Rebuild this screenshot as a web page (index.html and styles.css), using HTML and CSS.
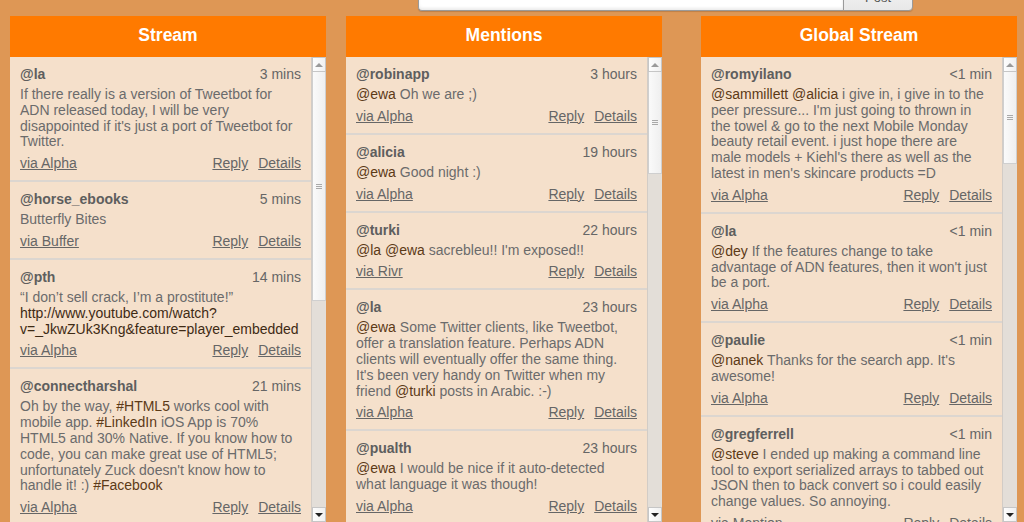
FILE: index.html
```html
<!DOCTYPE html>
<html lang="en">
<head>
    <meta charset="UTF-8" />
    <title>Alpha - Streams</title>
    <link rel="stylesheet" href="styles.css">
</head>
<body>

<div class="composer">
    <div class="composer-box"><span class="char-count">256</span></div>
    <button class="post-btn">Post</button>
</div>

<div class="columns">

    <section class="column">
        <h2 class="column-title">Stream</h2>
        <div class="column-body">
            <ul class="posts">
                <li class="post">
                    <div class="post-head"><span class="user">@la</span><span class="time">3 mins</span></div>
                    <p class="post-text">If there really is a version of Tweetbot for ADN released today, I will be very disappointed if it's just a port of Tweetbot for Twitter.</p>
                    <div class="post-foot"><a href="#">via Alpha</a><span class="actions"><a href="#">Reply</a><a href="#">Details</a></span></div>
                </li>
                <li class="post">
                    <div class="post-head"><span class="user">@horse_ebooks</span><span class="time">5 mins</span></div>
                    <p class="post-text">Butterfly Bites</p>
                    <div class="post-foot"><a href="#">via Buffer</a><span class="actions"><a href="#">Reply</a><a href="#">Details</a></span></div>
                </li>
                <li class="post">
                    <div class="post-head"><span class="user">@pth</span><span class="time">14 mins</span></div>
                    <p class="post-text">“I don’t sell crack, I’m a prostitute!” <a class="link" href="#">http://www.youtube.com/watch?<wbr>v=_JkwZUk3Kng&amp;feature=player_embedded</a></p>
                    <div class="post-foot"><a href="#">via Alpha</a><span class="actions"><a href="#">Reply</a><a href="#">Details</a></span></div>
                </li>
                <li class="post">
                    <div class="post-head"><span class="user">@connectharshal</span><span class="time">21 mins</span></div>
                    <p class="post-text">Oh by the way, <a class="tag" href="#">#HTML5</a> works cool with mobile app. <a class="tag" href="#">#LinkedIn</a> iOS App is 70% HTML5 and 30% Native. If you know how to code, you can make great use of HTML5; unfortunately Zuck doesn't know how to handle it! :) <a class="tag" href="#">#Facebook</a></p>
                    <div class="post-foot"><a href="#">via Alpha</a><span class="actions"><a href="#">Reply</a><a href="#">Details</a></span></div>
                </li>
            </ul>
            <div class="scrollbar">
                <div class="sb-btn sb-up"></div>
                <div class="sb-thumb" style="height: 229px;"></div>
                <div class="sb-track"></div>
                <div class="sb-btn sb-down"></div>
            </div>
        </div>
    </section>

    <section class="column">
        <h2 class="column-title">Mentions</h2>
        <div class="column-body">
            <ul class="posts">
                <li class="post">
                    <div class="post-head"><span class="user">@robinapp</span><span class="time">3 hours</span></div>
                    <p class="post-text"><a class="tag" href="#">@ewa</a> Oh we are ;)</p>
                    <div class="post-foot"><a href="#">via Alpha</a><span class="actions"><a href="#">Reply</a><a href="#">Details</a></span></div>
                </li>
                <li class="post">
                    <div class="post-head"><span class="user">@alicia</span><span class="time">19 hours</span></div>
                    <p class="post-text"><a class="tag" href="#">@ewa</a> Good night :)</p>
                    <div class="post-foot"><a href="#">via Alpha</a><span class="actions"><a href="#">Reply</a><a href="#">Details</a></span></div>
                </li>
                <li class="post">
                    <div class="post-head"><span class="user">@turki</span><span class="time">22 hours</span></div>
                    <p class="post-text"><a class="tag" href="#">@la</a> <a class="tag" href="#">@ewa</a> sacrebleu!! I'm exposed!!</p>
                    <div class="post-foot"><a href="#">via Rivr</a><span class="actions"><a href="#">Reply</a><a href="#">Details</a></span></div>
                </li>
                <li class="post">
                    <div class="post-head"><span class="user">@la</span><span class="time">23 hours</span></div>
                    <p class="post-text"><a class="tag" href="#">@ewa</a> Some Twitter clients, like Tweetbot, offer a translation feature. Perhaps ADN clients will eventually offer the same thing. It's been very handy on Twitter when my friend <a class="tag" href="#">@turki</a> posts in Arabic. :-)</p>
                    <div class="post-foot"><a href="#">via Alpha</a><span class="actions"><a href="#">Reply</a><a href="#">Details</a></span></div>
                </li>
                <li class="post">
                    <div class="post-head"><span class="user">@pualth</span><span class="time">23 hours</span></div>
                    <p class="post-text"><a class="tag" href="#">@ewa</a> I would be nice if it auto-detected what language it was though!</p>
                    <div class="post-foot"><a href="#">via Alpha</a><span class="actions"><a href="#">Reply</a><a href="#">Details</a></span></div>
                </li>
            </ul>
            <div class="scrollbar">
                <div class="sb-btn sb-up"></div>
                <div class="sb-thumb" style="height: 102px;"></div>
                <div class="sb-track"></div>
                <div class="sb-btn sb-down"></div>
            </div>
        </div>
    </section>

    <section class="column column-global">
        <h2 class="column-title">Global Stream</h2>
        <div class="column-body">
            <ul class="posts">
                <li class="post">
                    <div class="post-head"><span class="user">@romyilano</span><span class="time">&lt;1 min</span></div>
                    <p class="post-text"><a class="tag" href="#">@sammillett</a> <a class="tag" href="#">@alicia</a> i give in, i give in to the peer pressure... I'm just going to thrown in the towel &amp; go to the next Mobile Monday beauty retail event. i just hope there are male models + Kiehl's there as well as the latest in men's skincare products =D</p>
                    <div class="post-foot"><a href="#">via Alpha</a><span class="actions"><a href="#">Reply</a><a href="#">Details</a></span></div>
                </li>
                <li class="post">
                    <div class="post-head"><span class="user">@la</span><span class="time">&lt;1 min</span></div>
                    <p class="post-text"><a class="tag" href="#">@dey</a> If the features change to take advantage of ADN features, then it won't just be a port.</p>
                    <div class="post-foot"><a href="#">via Alpha</a><span class="actions"><a href="#">Reply</a><a href="#">Details</a></span></div>
                </li>
                <li class="post">
                    <div class="post-head"><span class="user">@paulie</span><span class="time">&lt;1 min</span></div>
                    <p class="post-text"><a class="tag" href="#">@nanek</a> Thanks for the search app. It's awesome!</p>
                    <div class="post-foot"><a href="#">via Alpha</a><span class="actions"><a href="#">Reply</a><a href="#">Details</a></span></div>
                </li>
                <li class="post">
                    <div class="post-head"><span class="user">@gregferrell</span><span class="time">&lt;1 min</span></div>
                    <p class="post-text"><a class="tag" href="#">@steve</a> I ended up making a command line tool to export serialized arrays to tabbed out JSON then to back convert so i could easily change values. So annoying.</p>
                    <div class="post-foot"><a href="#">via Mention</a><span class="actions"><a href="#">Reply</a><a href="#">Details</a></span></div>
                </li>
            </ul>
            <div class="scrollbar">
                <div class="sb-btn sb-up"></div>
                <div class="sb-thumb" style="height: 92px;"></div>
                <div class="sb-track"></div>
                <div class="sb-btn sb-down"></div>
            </div>
        </div>
    </section>

</div>

</body>
</html>
```

FILE: styles.css
```css
body {
  margin: 0;
  height: 522px;
  overflow: hidden;
  background-color: #de9755;
  font-family: "Liberation Sans", Arial, sans-serif;
  font-size: 14px;
  color: #6b6b6b;
}

/* composer, mostly scrolled out of view */
.composer {
  display: flex;
  height: 41px;
  margin: -30px 0 0 418px;
  width: 495px;
}

.composer-box {
  flex: 1;
  display: flex;
  align-items: flex-end;
  padding: 0 0 8px 5px;
  background-color: #fff;
  border: 1px solid #9a9a9a;
  border-right: none;
  border-radius: 0 0 0 4px;
  box-shadow: inset 0 -2px 3px rgba(0,0,0,0.08), 0 1px 1px rgba(0,0,0,0.15);
}

.char-count {
  color: #c4c4c4;
  font-size: 13px;
  line-height: 14px;
}

.post-btn {
  width: 70px;
  display: flex;
  align-items: flex-end;
  justify-content: center;
  padding: 0 0 5px;
  font-family: "Liberation Sans", Arial, sans-serif;
  font-size: 13px;
  line-height: 14px;
  color: #555;
  background: linear-gradient(#fafafa, #e8e8e8);
  border: 1px solid #9a9a9a;
  border-radius: 0 0 4px 0;
  box-shadow: 0 1px 1px rgba(0,0,0,0.15);
}

/* columns */
.columns {
  display: flex;
  gap: 20px;
  margin-top: 5px;
  padding-left: 10px;
}

.column {
  width: 316px;
  flex: none;
}

.column-global {
  margin-left: 19px;
}

.column-title {
  margin: 0;
  height: 41px;
  line-height: 39px;
  text-align: center;
  font-size: 17.5px;
  font-weight: bold;
  color: #fff;
  background-color: #ff7a00;
}

.column-body {
  display: flex;
  height: 465px;
  overflow: hidden;
  background-color: #f5e0cb;
}

.posts {
  flex: 1;
  margin: 0;
  padding: 0;
  list-style: none;
}

.post {
  padding: 8px 10px;
  border-bottom: 2px solid #dcd6d0;
}

.post-head {
  display: flex;
  justify-content: space-between;
  line-height: 18px;
  margin-bottom: 4px;
}

.user {
  font-weight: bold;
  color: #5e5e5e;
}

.time {
  color: #666;
}

.post-text {
  margin: 0;
  padding-right: 2px;
  line-height: 15.8px;
}

.post-text a {
  text-decoration: none;
}

.tag {
  color: #5c3a17;
}

.link {
  color: #3e2a14;
}

.post-foot {
  display: flex;
  margin-top: 4px;
  line-height: 18px;
}

.post-foot a {
  color: #666;
  text-decoration: underline;
}

.actions {
  display: flex;
  gap: 10px;
  margin-left: auto;
}

/* drawn scrollbar */
.scrollbar {
  width: 15px;
  flex: none;
  display: flex;
  flex-direction: column;
  background-color: #e3ded8;
  border-left: 1px solid #d2ccc6;
  box-sizing: border-box;
}

.sb-btn {
  height: 15px;
  flex: none;
  display: flex;
  align-items: center;
  justify-content: center;
  background: linear-gradient(to right, #fdfdfd, #f0f0f0);
  border: 1px solid #c6c6c6;
  box-sizing: border-box;
}

.sb-up::before {
  content: "";
  border-left: 4px solid transparent;
  border-right: 4px solid transparent;
  border-bottom: 4px solid #9a9a9a;
}

.sb-down::before {
  content: "";
  border-left: 4px solid transparent;
  border-right: 4px solid transparent;
  border-top: 4px solid #222;
}

.sb-thumb {
  flex: none;
  display: flex;
  align-items: center;
  justify-content: center;
  background: linear-gradient(to right, #fafafa, #efefef);
  border: 1px solid #cfcfcf;
  border-top: none;
  box-sizing: border-box;
}

.sb-thumb::before {
  content: "";
  width: 6px;
  height: 5px;
  background: repeating-linear-gradient(#a9a9a9 0 1px, transparent 1px 2px);
}

.sb-track {
  flex: 1;
}
```
